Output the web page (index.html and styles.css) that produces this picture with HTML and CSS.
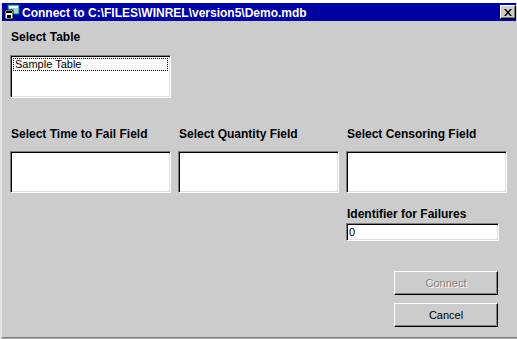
FILE: index.html
```html
<!DOCTYPE html>
<html lang="en">
<head>
  <meta charset="UTF-8" />
  <title>Connect to C:\FILES\WINREL\version5\Demo.mdb</title>
  <link rel="stylesheet" href="styles.css">
</head>
<body>
  <div class="window">
    <div class="top-strip"></div>
    <div class="titlebar">
      <svg class="app-icon" width="16" height="16" viewBox="0 0 16 16">
        <rect x="4" y="1" width="11" height="9" fill="#9fd8d8" stroke="#008080" />
        <rect x="5" y="2" width="9" height="2" fill="#ffffff" />
        <rect x="1" y="6" width="8" height="9" fill="#ffffff" stroke="#000000" />
        <rect x="2" y="7" width="6" height="2" fill="#000000" />
        <rect x="3" y="11" width="4" height="3" fill="#000000" />
      </svg>
      <span class="title">Connect to C:\FILES\WINREL\version5\Demo.mdb</span>
      <button class="close-btn" type="button">
        <svg width="8" height="7" viewBox="0 0 8 7">
          <path d="M0 0h2l2 2.5L6 0h2L5 3.5 8 7H6L4 4.5 2 7H0l3-3.5z" fill="#000" />
        </svg>
      </button>
    </div>

    <div class="content">
      <label class="field-label">Select Table</label>
      <div class="listbox table-list">
        <div class="list-item selected">Sample Table</div>
      </div>

      <div class="fields">
        <div class="field">
          <label class="field-label">Select Time to Fail Field</label>
          <div class="listbox field-list"></div>
        </div>
        <div class="field">
          <label class="field-label">Select Quantity Field</label>
          <div class="listbox field-list"></div>
        </div>
        <div class="field">
          <label class="field-label">Select Censoring Field</label>
          <div class="listbox field-list"></div>

          <label class="field-label ident-label">Identifier for Failures</label>
          <input class="textbox" type="text" value="0">

          <div class="actions">
            <button class="btn" type="button" disabled>Connect</button>
            <button class="btn" type="button">Cancel</button>
          </div>
        </div>
      </div>
    </div>
  </div>
</body>
</html>
```

FILE: styles.css
```css
html, body {
  margin: 0;
  height: 100%;
}
body {
  font-family: "Liberation Sans", Arial, sans-serif;
  background: #cccccc;
  overflow: hidden;
}
.window {
  height: 339px;
  box-sizing: border-box;
  border-left: 2px solid #e4e4e4;
  border-bottom: 1px solid #a8a8a8;
  box-shadow: inset 0 -1px 0 #808080;
  background: #cccccc;
}
.top-strip {
  height: 3px;
  margin-left: -2px;
  background: #ffffff;
}
.titlebar {
  display: flex;
  align-items: center;
  height: 18px;
  margin-right: 1px;
  background: #0000a0;
  color: #ffffff;
}
.app-icon {
  margin-left: 2px;
  flex: none;
}
.title {
  margin-left: 2px;
  padding-top: 1px;
  font-size: 12px;
  font-weight: bold;
  line-height: 18px;
  white-space: nowrap;
  flex: 1;
}
.close-btn {
  display: flex;
  align-items: center;
  justify-content: center;
  width: 16px;
  height: 14px;
  padding: 0;
  margin-right: 0;
  background: #cccccc;
  border: 1px solid;
  border-color: #ffffff #000000 #000000 #ffffff;
  box-shadow: inset -1px -1px 0 #808080;
}
.content {
  padding: 9px 0 0 8px;
}
.field-label {
  display: block;
  padding-left: 1px;
  font-size: 12px;
  font-weight: bold;
  line-height: 14px;
  color: #000000;
}
.listbox {
  box-sizing: border-box;
  background: #ffffff;
  border: 1px solid;
  border-color: #808080 #ffffff #ffffff #808080;
  box-shadow: inset 1px 1px 0 #000000, inset -1px -1px 0 #dfdfdf;
}
.table-list {
  width: 161px;
  height: 43px;
  margin-top: 11px;
  padding: 2px;
}
.list-item {
  font-size: 11px;
  line-height: 13px;
  padding-left: 2px;
}
.list-item.selected {
  outline: 1px dotted #000000;
  outline-offset: -1px;
}
.fields {
  display: grid;
  grid-template-columns: 161px 161px 161px;
  column-gap: 7px;
  margin-top: 29px;
}
.field-list {
  height: 42px;
  margin-top: 10px;
}
.ident-label {
  margin-top: 14px;
}
.textbox {
  display: block;
  box-sizing: border-box;
  width: 153px;
  height: 18px;
  margin: 2px 0 0;
  padding: 0 0 0 2px;
  font-family: inherit;
  font-size: 11px;
  background: #ffffff;
  border: 1px solid;
  border-color: #808080 #ffffff #ffffff #808080;
  box-shadow: inset 1px 1px 0 #000000, inset -1px -1px 0 #dfdfdf;
  outline: none;
}
.actions {
  display: flex;
  flex-direction: column;
  gap: 8px;
  margin: 30px 0 0 48px;
}
.btn {
  box-sizing: border-box;
  width: 104px;
  height: 24px;
  padding: 0;
  font-family: inherit;
  font-size: 11px;
  color: #000000;
  background: #cccccc;
  border: 1px solid;
  border-color: #ffffff #000000 #000000 #ffffff;
  box-shadow: inset -1px -1px 0 #808080;
}
.btn:disabled {
  color: #808080;
  text-shadow: 1px 1px 0 #ffffff;
}
```
